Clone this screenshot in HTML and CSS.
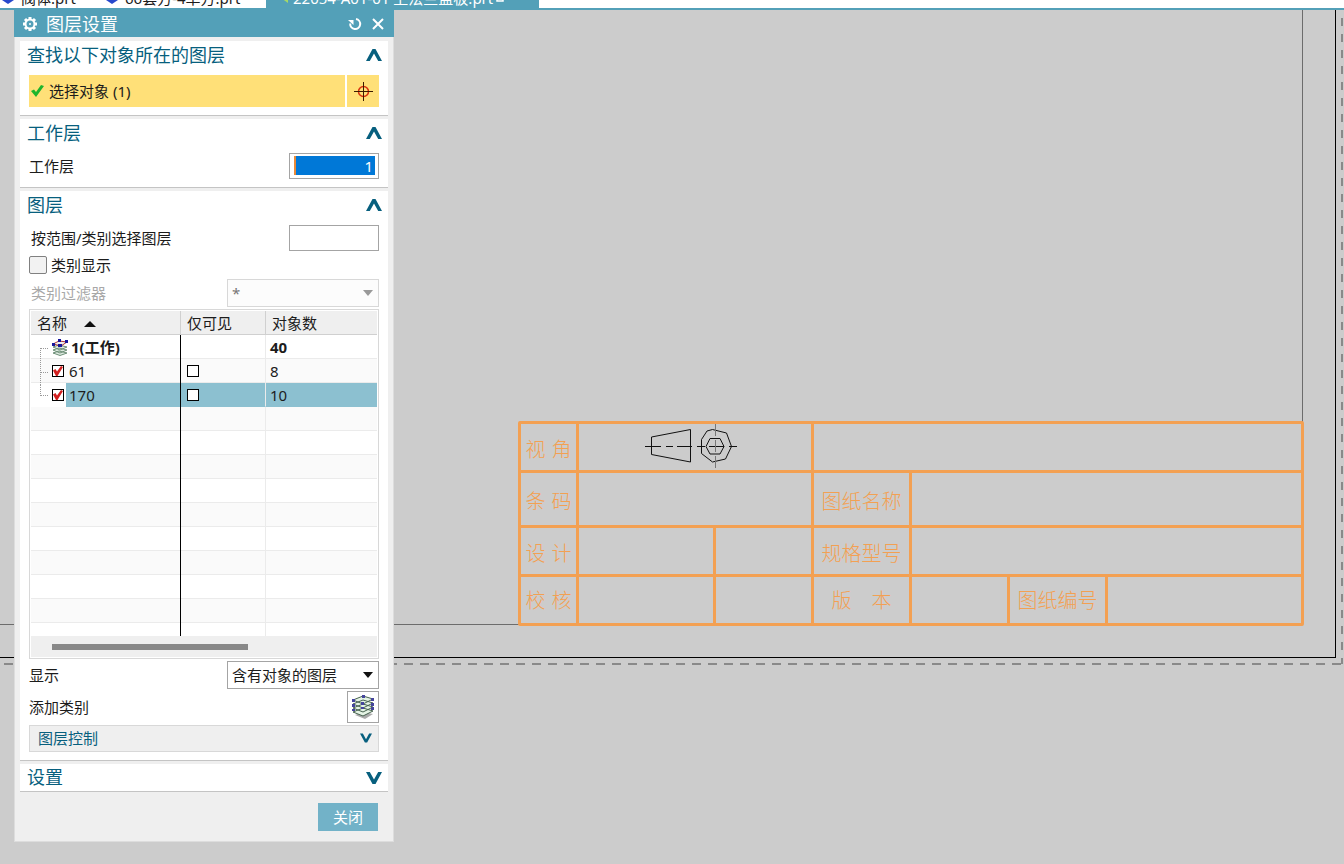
FILE: index.html
```html
<!DOCTYPE html>
<html lang="zh-CN">
<head>
<meta charset="utf-8">
<title>图层设置</title>
<link rel="stylesheet" href="styles.css">
</head>
<body>
<nav class="tabs">
  <button class="tab tab-first"><svg class="part" viewBox="0 0 14 12"><path d="M1 3 7 0l6 3v5l-6 4-6-4z" fill="#2748cc"/><path d="M1 3 7 6l6-3-6-3z" fill="#7d98ee"/></svg>阀体.prt</button>
  <button class="tab tab-second"><svg class="part" viewBox="0 0 14 12"><path d="M1 3 7 0l6 3v5l-6 4-6-4z" fill="#2748cc"/><path d="M1 3 7 6l6-3-6-3z" fill="#7d98ee"/></svg>66套方-4单方.prt</button>
  <button class="tab tab-active"><svg class="mark" viewBox="0 0 10 12"><path d="M1 6 8 0v11z" fill="#a5d867"/></svg>22054-A01-01 上法兰盖板.prt <svg class="pin" viewBox="0 0 8 10"><path d="M1 1h6v7H1z" fill="none" stroke="#fff" stroke-width="1.5"/></svg></button>
</nav>
<main class="canvas">
  <svg class="sheet" width="100%" height="854" aria-hidden="true">
    <svg x="100%" width="1344" height="854" overflow="visible">
      <g shape-rendering="crispEdges" fill="none">
        <path d="M-41.5 0V412M-1344 614.5H-825" stroke="#6c6c6c"/>
        <path d="M-8.5 0V647.500H-1344" stroke="#000"/>
        <path d="M-2 8V654" stroke="#898989" stroke-width="2" stroke-dasharray="8 8"/>
        <path d="M-1340 654H0" stroke="#898989" stroke-width="2" stroke-dasharray="9 7"/>
      </g>
    </svg>
  </svg>

  <section class="title-block">
    <div class="row r1"><div class="cell c58 pair"><span>视</span><span>角</span></div>
      <div class="cell c235 view"><svg class="projection" width="96" height="44" viewBox="0 0 96 44">
        <g fill="none" stroke="#111"><path d="M7.500 13 46.500 5.500V38L7.500 30.500zM63 7l-5.500 8.500v14L68.500 38l13-3 6-12.500L82.500 9 68.500 5.500zM66 14.500h10l4 8-4 7.500H66l-4-7.500z"/><path d="M1 22.500h16m5 0h7m4 0h15m5 0h8m4 0h15m5 0h8"/><path d="M71.500 0v12m0 4v12m0 4v12" stroke="#777"/></g></svg></div>
      <div class="cell grow"></div></div>
    <div class="row r2"><div class="cell c58 pair"><span>条</span><span>码</span></div><div class="cell c235"></div><div class="cell c98">图纸名称</div><div class="cell grow"></div></div>
    <div class="row r3"><div class="cell c58 pair"><span>设</span><span>计</span></div><div class="cell c137"></div><div class="cell c98"></div><div class="cell c98">规格型号</div><div class="cell grow"></div></div>
    <div class="row r4"><div class="cell c58 pair"><span>校</span><span>核</span></div><div class="cell c137"></div><div class="cell c98"></div><div class="cell c98 wide"><span>版</span><span>本</span></div><div class="cell c98"></div><div class="cell c98">图纸编号</div><div class="cell grow"></div></div>
  </section>

  <form class="dialog">
    <header class="titlebar">
      <svg width="16" height="16" viewBox="0 0 16 16"><circle cx="8" cy="8" r="4.500" fill="none" stroke="#fff" stroke-width="2"/><circle cx="8" cy="8" r="1" fill="#fff"/><g stroke="#fff" stroke-width="3"><path d="M8 1v2M8 13v2M1 8h2M13 8h2M3 3l1.500 1.500M11.500 11.500 13 13M3 13l1.500-1.500M11.500 4.500 13 3"/></g></svg>
      <h1>图层设置</h1>
      <button type="button" class="plain" aria-label="重置"><svg width="14" height="14" viewBox="0 0 14 14"><path d="M8 2a5 5 0 1 1-5.800 4.500" fill="none" stroke="#fff" stroke-width="2"/><path d="M0 3h5.500v5z" fill="#fff"/></svg></button>
      <button type="button" class="plain" aria-label="关闭窗口"><svg width="12" height="12" viewBox="0 0 12 12"><path d="m1 1 10 10M11 1 1 11" stroke="#fff" stroke-width="2"/></svg></button>
    </header>

    <section class="panel find">
      <h2>查找以下对象所在的图层<svg class="chev" viewBox="0 0 16 12"><path d="M0 12 6.500 0h3L16 12h-3.800L8 4.500 3.800 12z"/></svg></h2>
      <div class="select-row">
        <button type="button" class="select-object"><svg width="13" height="12" viewBox="0 0 13 12"><path d="m0 6 3-1.500L5 7l5-7 3 1-8 11z" fill="#1db52c"/></svg>选择对象 (1)</button>
        <button type="button" class="target" aria-label="选择"><svg width="19" height="19" viewBox="0 0 19 19"><circle cx="9.500" cy="9.500" r="5" fill="none" stroke="#d8320f" stroke-width="1.500"/><path d="M9.500 0v19M0 9.500h19" stroke="#3b1a00" stroke-width="1"/></svg></button>
      </div>
    </section>

    <section class="panel work">
      <h2>工作层<svg class="chev" viewBox="0 0 16 12"><path d="M0 12 6.500 0h3L16 12h-3.800L8 4.500 3.800 12z"/></svg></h2>
      <div class="field"><label for="work">工作层</label><span class="box"><input id="work" class="selected" value="1"></span></div>
    </section>

    <section class="panel layers">
      <h2>图层<svg class="chev" viewBox="0 0 16 12"><path d="M0 12 6.500 0h3L16 12h-3.800L8 4.500 3.800 12z"/></svg></h2>
      <div class="field range"><label for="range">按范围/类别选择图层</label><input id="range" class="box"></div>
      <label class="check"><input type="checkbox">类别显示</label>
      <div class="field filter"><label for="filter">类别过滤器</label><span class="drop"><select id="filter" disabled><option>*</option></select></span></div>
      <div class="grid">
        <div class="grid-view">
        <table>
          <colgroup><col class="col-name"><col class="col-vis"><col></colgroup>
          <thead><tr><th>名称<svg class="sort" width="12" height="6" viewBox="0 0 12 6"><path d="M0 6 6 0l6 6z" fill="#111"/></svg></th><th>仅可见</th><th>对象数</th></tr></thead>
          <tbody>
            <tr class="bold"><td><div class="node first"><i class="branch"></i><svg width="16" height="17" viewBox="0 0 16 17"><g fill="#dce9df" stroke="#6f9079"><path d="m1 14 6-2 8 2-7 2.500zM1 11l6-2 8 2-7 3zM1 8l6-2 8 2-7 3z"/></g><path d="m1 5 6-3 8 1-6 4z" fill="#eee" stroke="#a33"/><g fill="#17179b"><path d="M0 4h3v3H0zM6 0h3v3H6zM13 1h3v3h-3zM6 5h4v3H6z"/></g></svg><b>1(工作)</b></div></td><td></td><td>40</td></tr>
            <tr><td><div class="node"><i class="branch"></i><input type="checkbox" class="tick" checked aria-label="61"><b>61</b></div></td><td><input type="checkbox" class="tick" aria-label="61 仅可见"></td><td>8</td></tr>
            <tr class="active"><td><div class="node last"><i class="branch"></i><input type="checkbox" class="tick" checked aria-label="170"><b>170</b></div></td><td><input type="checkbox" class="tick" aria-label="170 仅可见"></td><td>10</td></tr>
            <tr><td></td><td></td><td></td></tr><tr><td></td><td></td><td></td></tr><tr><td></td><td></td><td></td></tr><tr><td></td><td></td><td></td></tr><tr><td></td><td></td><td></td></tr><tr><td></td><td></td><td></td></tr><tr><td></td><td></td><td></td></tr><tr><td></td><td></td><td></td></tr><tr><td></td><td></td><td></td></tr><tr><td></td><td></td><td></td></tr>
          </tbody>
        </table>
        </div>
        <div class="scroll"><div class="thumb"></div></div>
      </div>
      <div class="field show"><label for="show">显示</label><span class="drop"><select id="show"><option>含有对象的图层</option></select></span></div>
      <div class="field add"><label for="add">添加类别</label><button type="button" id="add" class="add-button"><svg width="24" height="24" viewBox="0 0 24 24"><path d="m4 20 8-3 10 2-8 5z" fill="#aaa"/><g fill="#e5f4e5" stroke="#47624f"><path d="m2 17 10-4 10 3-10 5zM2 13l10-4 10 3-10 5zM2 9l10-4 10 3-10 5zM2 5l10-4 10 3-10 5z"/></g><g fill="#45459c"><path d="M1 4h3v3H1zM11 0h3v3h-3zM20 3h3v3h-3zM10 7h3v3h-3zM1 9h3v3H1zM20 8h3v3h-3zM1 14h3v2H1zM20 12h3v3h-3zM10 12h3v2h-3z"/></g></svg></button></div>
      <button type="button" class="subgroup">图层控制<svg class="chev small" viewBox="0 0 16 12"><path d="M0 0 6.500 12h3L16 0h-3.800L8 7.500 3.800 0z"/></svg></button>
    </section>

    <section class="panel settings"><h2>设置<svg class="chev" viewBox="0 0 16 12"><path d="M0 0 6.500 12h3L16 0h-3.800L8 7.500 3.800 0z"/></svg></h2></section>
    <footer><button type="button" class="close">关闭</button></footer>
  </form>
</main>
</body>
</html>
```

FILE: styles.css
```css
* { box-sizing: border-box; }
body {
  margin: 0;
  min-height: 100vh;
  background: #ccc;
  color: #1c1c1c;
  font: 15px/20px "Noto Sans", "Noto Sans CJK SC", sans-serif;
  overflow: hidden;
}
button, input, select { font: inherit; color: inherit; margin: 0; }
button { border: 0; padding: 0; background: none; display: flex; align-items: center; text-align: left; }
svg { flex: none; }

.tabs { display: flex; align-items: flex-end; height: 10px; background: #fff; border-bottom: 2px solid #53a0b8; overflow: hidden; }
.tab { flex: none; height: 20px; white-space: nowrap; line-height: 20px; }
.tab-first { width: 104px; padding-left: 1px; gap: 6px; }
.tab-second { width: 162px; padding-left: 1px; gap: 6px; }
.tab-active { width: 273px; padding-left: 14px; gap: 3px; background: #53a0b8; color: #fff; }
.part { width: 14px; height: 12px; }
.mark { width: 10px; height: 12px; }
.pin { width: 8px; height: 10px; }

.canvas { position: relative; min-height: calc(100vh - 10px); }
.sheet { position: absolute; inset: 0; }

/* Drawing title block, anchored to the sheet frame corner */
.title-block {
  position: absolute; top: 411px; right: 40px; width: 786px;
  border: 3px solid #f3a052; border-radius: 2px;
  color: #f3a052; font-size: 20px; line-height: 28px; font-weight: 300;
  font-family: "Noto Sans CJK SC", sans-serif;
}
.row { display: flex; border-bottom: 3px solid #f3a052; }
.r1, .r3 { height: 49px; }
.r2 { height: 55px; }
.r4 { height: 46px; border-bottom: 0; }
.cell { flex: none; display: flex; align-items: center; justify-content: center; border-right: 3px solid #f3a052; padding-top: 4px; }
.r4 .cell { padding-top: 0; }
.cell.grow { flex: 1; border-right: 0; }
.c58 { width: 58px; }
.c98 { width: 98px; }
.c137 { width: 137px; }
.c235 { width: 235px; }
.pair { gap: 6px; }
.wide { gap: 20px; }
.cell.view { padding: 0 6px 2px 0; }

.dialog { position: relative; width: 380px; margin-left: 14px; background: #efefef; border: 1px solid #ddd; border-top: 0; }
.titlebar { display: flex; align-items: center; height: 27px; margin: 0 -1px; padding: 0 10px 0 8px; gap: 8px; background: #53a0b8; color: #fff; }
.titlebar h1 { flex: 1; margin: 0; font-size: 18px; line-height: 26px; font-weight: 400; }
.plain { height: 20px; }
.plain + .plain { margin-left: 2px; }
.panel { margin: 0 5px 3px; padding: 0 9px; background: #fff; border-bottom: 1px solid #c4c4c4; }
.panel h2 { display: flex; align-items: center; justify-content: space-between; margin: 0 -3px 0 -2px; font-size: 18px; line-height: 28px; font-weight: 400; color: #075f7e; }
.chev { width: 16px; height: 12px; fill: #075f7e; }
.chev.small { width: 12px; height: 10px; }

.find { margin-top: 4px; height: 75px; }
.select-row { display: flex; gap: 2px; margin-top: 6px; height: 32px; }
.select-object { flex: 1; background: #ffe078; padding-left: 2px; gap: 5px; }
.target { width: 32px; background: #ffe078; justify-content: center; }

.work { height: 69px; }
.field { display: flex; align-items: center; justify-content: space-between; }
.box { width: 90px; height: 26px; border: 1px solid #a4a4a4; background: #fff; padding: 0 3px; outline: 0; }
.work .field { margin-top: 6px; }
.work .box { padding: 2px 3px 3px 4px; }
.selected { display: block; width: 100%; height: 19px; border: 0; border-left: 2px solid #e88a3a; background: #0078d7; color: #fff; text-align: right; padding: 0 2px; outline: 0; }

.layers { height: 570px; }
.range { margin-top: 6px; }
.range label, .filter label { padding-left: 2px; }
.check { display: flex; align-items: center; gap: 4px; height: 28px; }
.check input { appearance: none; width: 18px; height: 18px; border: 1px solid #808080; border-radius: 2px; background: #f2f2f2; }
.drop { position: relative; width: 152px; }
.drop::after { content: ""; position: absolute; right: 6px; top: 11px; border: 5px solid transparent; border-top: 6px solid #111; border-bottom: 0; pointer-events: none; }
.drop select { display: block; width: 100%; height: 28px; appearance: none; border: 1px solid #a4a4a4; border-radius: 0; background: #fff; padding: 0 4px; }
.filter { color: #a8a8a8; }
.filter select { border-color: #d8d8d8; background: #fcfcfc; color: #777; opacity: 1; }
.filter .drop::after { border-top-color: #999; }

.grid { margin-top: 2px; height: 350px; border: 1px solid #d8d8d8; padding: 1px; }
.grid-view { height: 325px; overflow: hidden; }
table { width: 100%; border-collapse: separate; border-spacing: 0; table-layout: fixed; }
.col-name { width: 150px; }
.col-vis { width: 85px; }
th { height: 24px; padding: 0 6px; background: #efefef; border-right: 1px solid #d0d0d0; border-bottom: 1px solid #d0d0d0; font-weight: 400; text-align: left; }
td { height: 24px; padding: 0 6px; border-right: 1px solid #ebebeb; border-bottom: 1px solid #ebebeb; }
th:last-child, td:last-child { border-right: 0; }
td:last-child { padding: 0 4px; }
td:first-child { border-right: 1px solid #000; border-bottom: 0; padding: 0; box-shadow: inset 0 -1px #ebebeb; }
.sort { margin-left: 17px; vertical-align: 2px; }
tbody tr:nth-child(even) td { background: #fafafa; }
tbody .active td { background: #8cc0d0; border-bottom-color: #8cc0d0; }
tbody .active td:first-child { background: linear-gradient(90deg, #fff 35px, #8cc0d0 35px); box-shadow: none; }
.bold { font-weight: 700; }
.node { display: flex; align-items: center; height: 23px; padding-left: 9px; }
.node b { font-weight: inherit; margin-left: 5px; }
.node.first b { margin-left: 4px; }
.branch { align-self: stretch; width: 9px; margin-right: 3px; border-left: 1px dotted #999; background: repeating-linear-gradient(90deg, #999 0 1px, transparent 1px 2px) 0 12px / 100% 1px no-repeat; }
.first .branch { margin: 12px 2px 0 0; background-position: 0 0; }
.node.first b { margin-left: 3px; }
.first svg { margin-left: 1px; }
.last .branch { height: 12px; align-self: flex-start; background-position: 0 11px; }
.tick { appearance: none; display: block; width: 12px; height: 12px; border: 1px solid #000; background: #fff; }
.node .tick:checked::before { content: ""; display: block; width: 10px; height: 10px; background: #d22020; clip-path: polygon(0 45%, 25% 30%, 40% 55%, 80% 0, 100% 10%, 45% 100%, 30% 100%); }
.scroll { height: 21px; background: #efefef; padding: 8px 0 0 21px; }
.thumb { width: 196px; height: 6px; background: #888; }
.show { margin-top: 2px; }
.add { margin-top: 2px; }
.add-button { width: 32px; height: 32px; border: 1px solid #a4a4a4; justify-content: center; }
.subgroup { width: 100%; height: 27px; margin-top: 2px; padding: 0 6px 2px 8px; justify-content: space-between; border: 1px solid #d8d8d8; background: #efefef; color: #075f7e; }

.settings { margin-bottom: 0; }
.settings h2 { line-height: 27px; }
footer { display: flex; justify-content: flex-end; padding: 11px 15px 10px; }
.close { width: 60px; height: 28px; justify-content: center; background: #72b2c8; color: #fff; }
```
